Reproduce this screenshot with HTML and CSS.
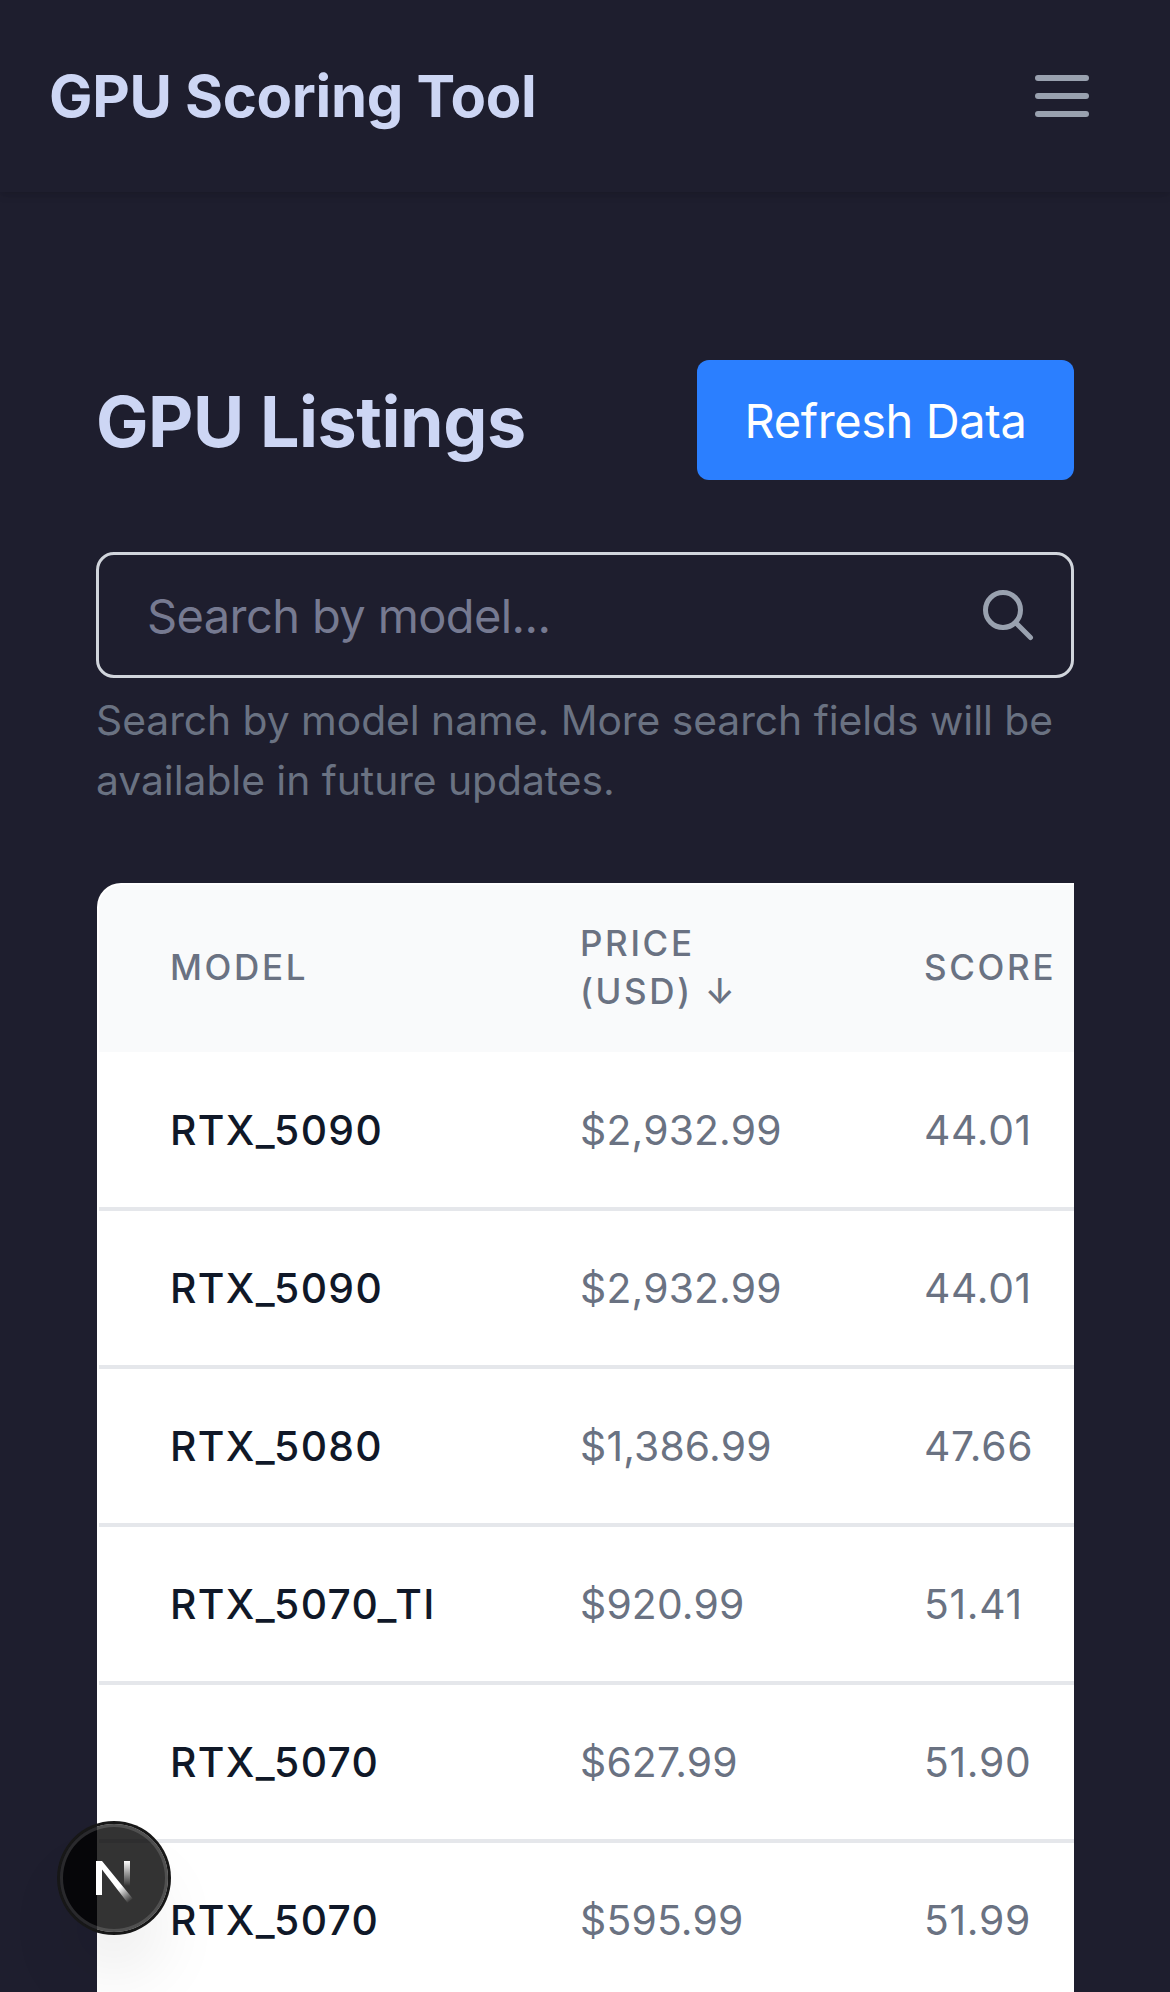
FILE: index.html
```html
<!DOCTYPE html>
<html lang="en">
<head>
  <meta charset="utf-8">
  <title>GPU Scoring Tool</title>
  <link rel="stylesheet" href="styles.css">
</head>
<body>
  <nav class="navbar">
    <span class="brand">GPU Scoring Tool</span>
    <button class="menu-button" aria-label="Toggle menu">
      <span class="menu-bar"></span>
      <span class="menu-bar"></span>
      <span class="menu-bar"></span>
    </button>
  </nav>

  <main class="content">
    <header class="page-header">
      <h1 class="page-title">GPU Listings</h1>
      <button class="refresh-button">Refresh Data</button>
    </header>

    <div class="search-box">
      <input class="search-input" type="text" placeholder="Search by model...">
      <svg class="search-icon" viewBox="0 0 24 24" fill="none" stroke="currentColor" stroke-width="2" stroke-linecap="round" stroke-linejoin="round">
        <path d="M21 21l-6-6m2-5a7 7 0 11-14 0 7 7 0 0114 0z"/>
      </svg>
    </div>
    <p class="search-hint">Search by model name. More search fields will be available in future updates.</p>

    <div class="table-card">
      <table class="listings">
        <colgroup>
          <col class="col-model">
          <col class="col-price">
          <col class="col-score">
        </colgroup>
        <thead>
          <tr><th>MODEL</th><th>PRICE<br>(USD) ↓</th><th>SCORE</th></tr>
        </thead>
        <tbody>
          <tr><td class="model">RTX_5090</td><td class="price">$2,932.99</td><td class="score">44.01</td></tr>
          <tr><td class="model">RTX_5090</td><td class="price">$2,932.99</td><td class="score">44.01</td></tr>
          <tr><td class="model">RTX_5080</td><td class="price">$1,386.99</td><td class="score">47.66</td></tr>
          <tr><td class="model">RTX_5070_TI</td><td class="price">$920.99</td><td class="score">51.41</td></tr>
          <tr><td class="model">RTX_5070</td><td class="price">$627.99</td><td class="score">51.90</td></tr>
          <tr><td class="model">RTX_5070</td><td class="price">$595.99</td><td class="score">51.99</td></tr>
        </tbody>
      </table>
    </div>
  </main>

  <div class="dev-badge">
    <svg class="dev-logo" viewBox="0 0 108 108">
      <defs>
        <linearGradient id="diagonal-fade" gradientUnits="userSpaceOnUse" x1="60" y1="63" x2="71" y2="77">
          <stop offset="0" stop-color="#fff"/>
          <stop offset="1" stop-color="#fff" stop-opacity="0"/>
        </linearGradient>
        <linearGradient id="stem-fade" gradientUnits="userSpaceOnUse" x1="67" y1="37" x2="67" y2="62">
          <stop offset="0" stop-color="#fff"/>
          <stop offset="1" stop-color="#fff" stop-opacity="0"/>
        </linearGradient>
      </defs>
      <path fill="url(#diagonal-fade)" d="M36 37h6l30.7 37.6-5.2 4.2L42 45.5V71h-6z"/>
      <path fill="url(#stem-fade)" d="M64 37h6v25h-6z"/>
    </svg>
  </div>
</body>
</html>
```
FILE: styles.css
```css
* {
  box-sizing: border-box;
}

html {
  background: #1e1e2e;
}

body {
  margin: 0;
  height: 1992px;
  overflow: hidden;
  background: #1e1e2e;
  color: #cdd6f4;
  font-family: Inter, "Liberation Sans", sans-serif;
}

button,
input {
  font-family: inherit;
}

.navbar {
  display: flex;
  align-items: center;
  justify-content: space-between;
  height: 192px;
  padding: 0 81px 0 49px;
  box-shadow: 0 3px 9px rgba(0, 0, 0, 0.1), 0 3px 6px -3px rgba(0, 0, 0, 0.1);
}

.brand {
  font-size: 58px;
  font-weight: 700;
  line-height: 84px;
  letter-spacing: -0.3px;
}

.menu-button {
  display: flex;
  flex-direction: column;
  gap: 12px;
  padding: 0;
  border: 0;
  background: none;
}

.menu-bar {
  width: 54px;
  height: 6px;
  border-radius: 3px;
  background: #99a1af;
}

.content {
  padding: 168px 96px 0;
}

.page-header {
  display: flex;
  align-items: center;
  justify-content: space-between;
  height: 120px;
  margin-bottom: 72px;
}

.page-title {
  margin: 0;
  padding-top: 3px;
  font-size: 70px;
  font-weight: 700;
  line-height: 84px;
  letter-spacing: -0.45px;
}

.refresh-button {
  width: 377px;
  height: 120px;
  padding: 0;
  border: 0;
  border-radius: 12px;
  background: #2b7fff;
  color: #fff;
  font-size: 47px;
  letter-spacing: -0.4px;
}

.search-box {
  position: relative;
}

.search-input {
  display: block;
  width: 100%;
  height: 126px;
  padding: 0 120px 0 48px;
  border: 3px solid #d1d5dc;
  border-radius: 18px;
  background: transparent;
  color: #cdd6f4;
  font-size: 47px;
  letter-spacing: -0.6px;
}

.search-input::placeholder {
  color: #767a91;
  opacity: 1;
}

.search-icon {
  position: absolute;
  top: 33px;
  right: 36px;
  width: 60px;
  height: 60px;
  color: #99a1af;
}

.search-hint {
  margin: 12px 0 73px;
  color: #6a7282;
  font-size: 40.8px;
  line-height: 60px;
  letter-spacing: -0.04px;
}

.table-card {
  margin-left: 1px;
  padding: 2px 0 0 2px;
  border-radius: 24px 0 0 0;
  background: #fff;
  overflow: hidden;
}

.listings {
  width: 100%;
  table-layout: fixed;
  border-collapse: separate;
  border-spacing: 0;
  color: #6a7282;
}

.col-model {
  width: 410px;
}

.col-price {
  width: 344px;
}

.listings th {
  padding: 34px 0 37px 71px;
  border-bottom: 1px solid #fff;
  background: #f9fafb;
  background-clip: padding-box;
  font-size: 35px;
  font-weight: 500;
  line-height: 48px;
  letter-spacing: 2.65px;
  text-align: left;
  white-space: nowrap;
}

.listings th:first-child {
  border-top-left-radius: 22px;
}

.listings td {
  padding: 47px 0 47px 71px;
  border-bottom: 4px solid #e5e7eb;
  font-size: 40.8px;
  line-height: 60px;
  white-space: nowrap;
}

.listings .model {
  color: #101828;
  font-weight: 500;
  letter-spacing: 1.35px;
}

.listings .price {
  letter-spacing: 0.2px;
}

.listings .score {
  letter-spacing: 0.7px;
}

.dev-badge {
  position: fixed;
  left: 60px;
  bottom: 60px;
  width: 108px;
  height: 108px;
  border-radius: 50%;
  background: rgba(0, 0, 0, 0.8);
  box-shadow:
    0 0 0 3px #171717,
    inset 0 0 0 3px rgba(255, 255, 255, 0.14),
    0 48px 80px -24px rgba(0, 0, 0, 0.2);
}

.dev-logo {
  display: block;
  width: 108px;
  height: 108px;
}
```
